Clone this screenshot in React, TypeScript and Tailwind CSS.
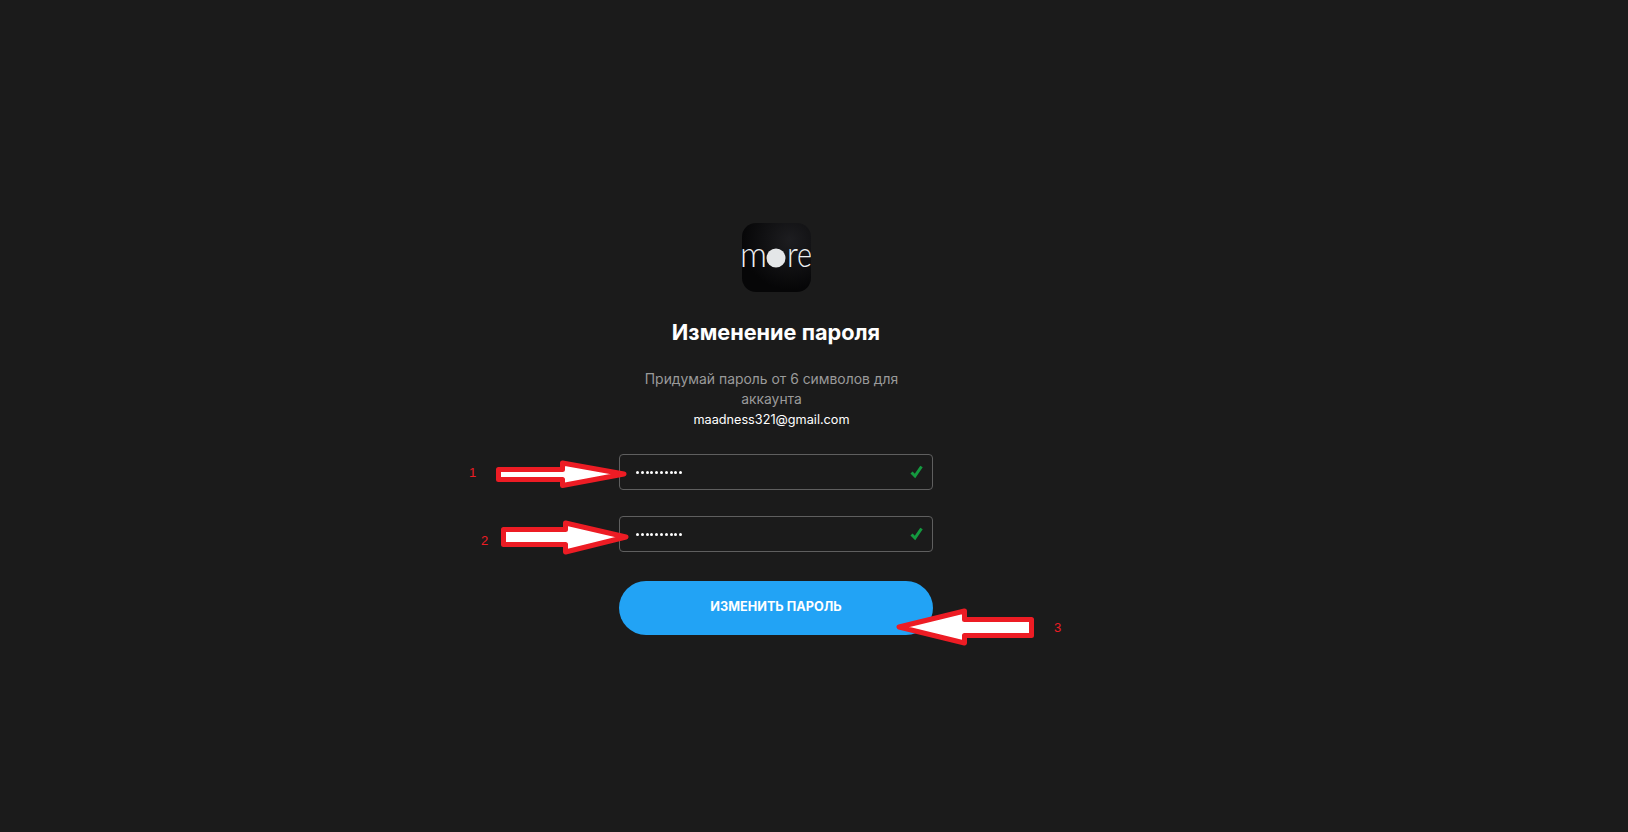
const FONT = "font-['Inter','Open_Sans',sans-serif]";

const arrows = [
  "498.5,469.5 562.5,469.5 562.5,463 624,474 562.5,485.5 562.5,479.5 498.5,479.5",
  "503.5,529.5 565.5,529.5 565.5,523 626,537 565.5,552 565.5,544.5 503.5,544.5",
  "1031.5,619.5 964.5,619.5 964.5,611 899,627 964.5,643 964.5,635.5 1031.5,635.5",
];

function PasswordField() {
  return (
    <div className="flex h-[36px] w-[314px] items-center justify-between rounded-[4px] border border-[#5f5f5f] pl-[16px] pr-[9px]">
      <span className="flex gap-[1.8px]">
        {Array.from({ length: 10 }).map((_, i) => (
          <span key={i} className="h-[3px] w-[3px] rounded-full bg-white" />
        ))}
      </span>
      <svg className="h-[14px] w-[13px]" viewBox="0 0 13 14" fill="none">
        <path d="M1.5 7.5L5 11L11.5 1.5" stroke="#14993f" strokeWidth={3} />
      </svg>
    </div>
  );
}

function Logo() {
  return (
    <div className="relative h-[69px] w-[69px] overflow-hidden rounded-[14px] bg-[radial-gradient(circle_at_70%_25%,#1d1d20,#060607_70%)]">
      <svg className="h-full w-full" viewBox="0 0 69 69" fill="#eceff1" fontFamily="Lato, sans-serif" fontSize="36" fontWeight="300">
        <text x="-2" y="44" textLength="27" lengthAdjust="spacingAndGlyphs">m</text>
        <circle cx="34" cy="35" r="9.5" fill="#e4e6e8" />
        <text x="45" y="44" textLength="11" lengthAdjust="spacingAndGlyphs">r</text>
        <text x="55" y="44" textLength="15" lengthAdjust="spacingAndGlyphs">e</text>
      </svg>
    </div>
  );
}

export default function App() {
  return (
    <div className={`relative flex h-[832px] w-full flex-col items-center overflow-hidden bg-[#1b1b1b] pr-[76px] pt-[223px] ${FONT}`}>
      <Logo />
      <h1 className="mt-[28px] text-[21.7px] leading-[24px] font-bold text-white">Изменение пароля</h1>
      <p className="mt-[25px] w-[314px] pr-[9px] text-center text-[13.9px] leading-[20px] text-[#9a9a9a]">
        Придумай пароль от 6 символов для аккаунта
        <br />
        <span className="text-[12.7px] text-white">maadness321@gmail.com</span>
      </p>
      <div className="mt-[24px] flex flex-col gap-[26px]">
        <PasswordField />
        <PasswordField />
      </div>
      <button className="mt-[29px] h-[54px] w-[314px] rounded-[27px] bg-[#22a3f5] pb-[2px] text-[12.7px] font-bold text-white">
        ИЗМЕНИТЬ ПАРОЛЬ
      </button>

      {/* annotations on top of the screenshot */}
      <svg className="absolute inset-0 h-full w-full" viewBox="0 0 1628 832" fill="none">
        {arrows.map((p) => (
          <polygon key={p} points={p} fill="#fff" stroke="#ed1c24" strokeWidth={5} strokeLinejoin="round" />
        ))}
      </svg>
      <span className="absolute top-[463px] left-[469px] font-['Liberation_Sans',sans-serif] text-[13px] text-[#ed1c24]">1</span>
      <span className="absolute top-[531px] left-[481px] font-['Liberation_Sans',sans-serif] text-[13px] text-[#ed1c24]">2</span>
      <span className="absolute top-[618px] left-[1054px] font-['Liberation_Sans',sans-serif] text-[13px] text-[#ed1c24]">3</span>
    </div>
  );
}
